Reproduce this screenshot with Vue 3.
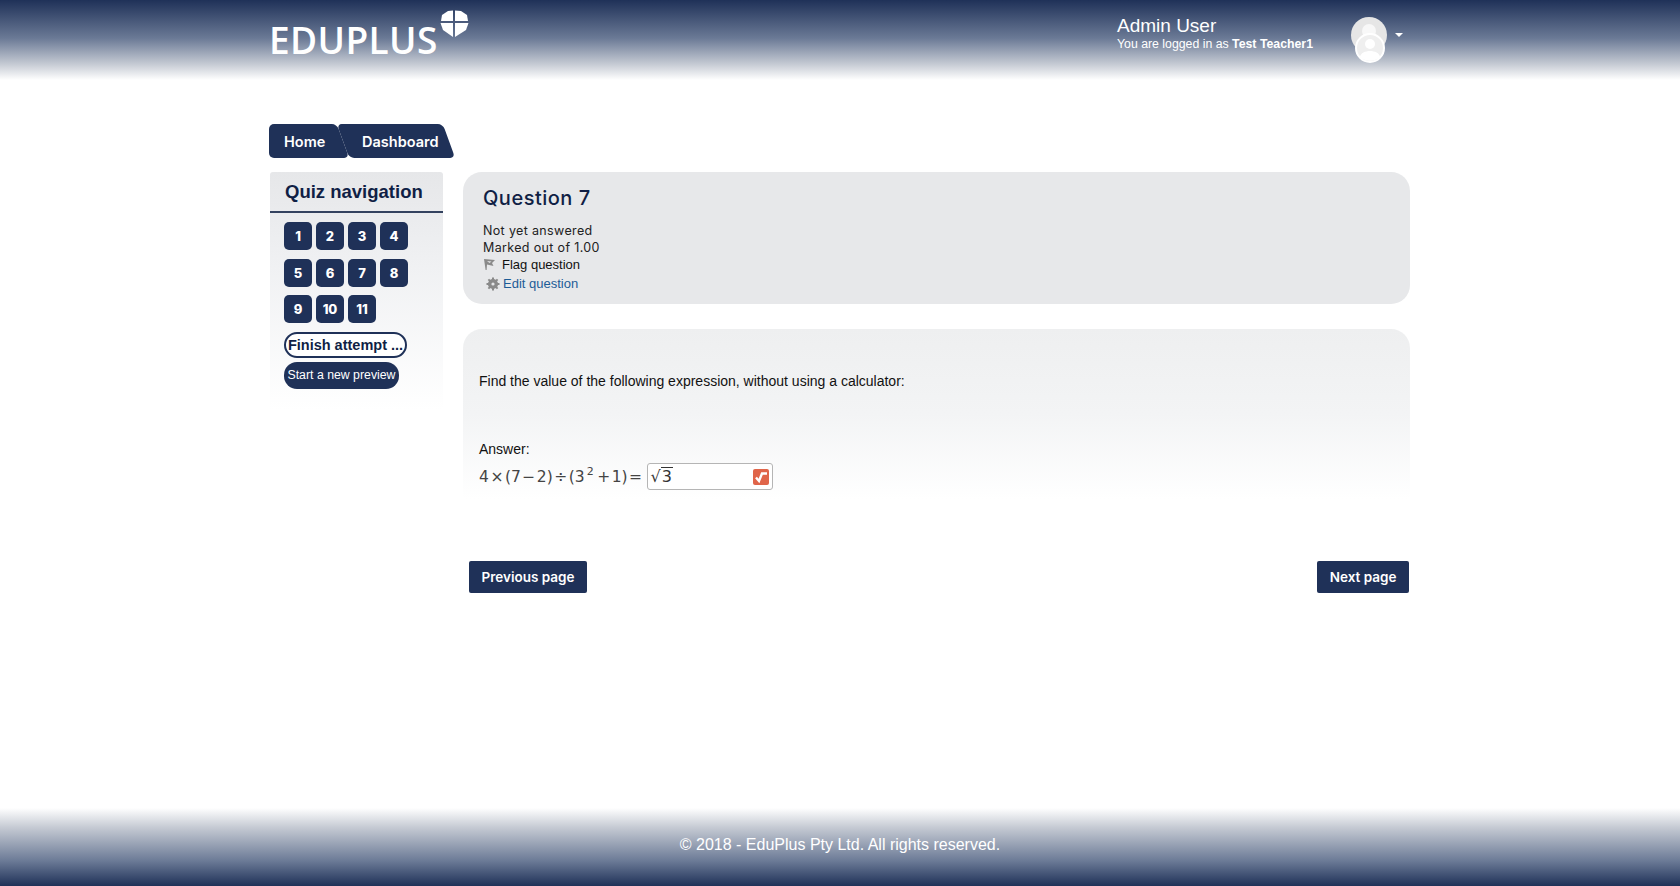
<script setup>
const pages = [1, 2, 3, 4, 5, 6, 7, 8, 9, 10, 11];
</script>

<template>
  <div class="page">
    <header class="top">
      <div class="top-inner">
        <div class="logo">
          <span class="logo-text">EDUPLUS</span>
          <svg class="logo-mark" width="29" height="28" viewBox="0 0 29 28">
            <path d="M8 1 L13 0.5 L13 11 L1 11 L2 5 Z" fill="#fff" />
            <path d="M15 0.5 L21 1 L27 5 L28 11 L15 11 Z" fill="#fff" />
            <path d="M0.5 13 L13 13 L13 27 L3 20 Z" fill="#fff" />
            <path d="M15 13 L28.5 13 L26 20 L15 27 Z" fill="#fff" />
          </svg>
        </div>
        <div class="user">
          <div class="user-text">
            <div class="user-name">Admin User</div>
            <div class="user-sub">You are logged in as <b>Test Teacher1</b></div>
          </div>
          <svg class="avatar" width="38" height="46" viewBox="0 0 38 46">
            <circle cx="18" cy="18" r="18" fill="#e6e6e6" />
            <circle cx="18" cy="14" r="7" fill="#f8f8f8" />
            <circle cx="19" cy="31" r="14" fill="#efefef" stroke="#fff" stroke-width="2" />
            <circle cx="19" cy="27" r="5" fill="#fff" />
            <path d="M9 40 C10 32 28 32 29 40 C24 45 14 45 9 40 Z" fill="#fff" />
          </svg>
          <span class="caret"></span>
        </div>
      </div>
    </header>

    <main class="content">
      <nav class="tabs">
        <a class="tab tab-home">Home</a>
        <a class="tab tab-dash">Dashboard</a>
      </nav>

      <div class="columns">
        <aside class="side">
          <h2 class="side-title">Quiz navigation</h2>
          <div class="side-body">
            <div class="grid">
              <span v-for="p in pages" :key="p" class="num">{{ p }}</span>
            </div>
            <a class="finish">Finish attempt ...</a>
            <a class="preview">Start a new preview</a>
          </div>
        </aside>

        <section class="main">
          <div class="info">
            <h3 class="q-title">Question 7</h3>
            <div class="meta">Not yet answered</div>
            <div class="meta">Marked out of 1.00</div>
            <div class="line flag">
              <svg width="13" height="13" viewBox="0 0 13 13">
                <path d="M1 1 L12 2 L9 5 L10.5 8 L4 6.5 L3.6 12 L2.6 12 Z" fill="#8a8a8a" />
                <path d="M4 3 L8.5 3.5 L6.5 5 Z" fill="#e4e5e7" />
              </svg>
              <span>Flag question</span>
            </div>
            <div class="line edit">
              <svg width="14" height="14" viewBox="0 0 14 14">
                <circle cx="7" cy="7" r="3.6" fill="none" stroke="#8a8a8a" stroke-width="3" />
                <path d="M7 0.5 V13.5 M0.5 7 H13.5 M2.4 2.4 L11.6 11.6 M11.6 2.4 L2.4 11.6" stroke="#8a8a8a" stroke-width="2" />
                <circle cx="7" cy="7" r="1.6" fill="#e4e5e7" />
              </svg>
              <a>Edit question</a>
            </div>
          </div>

          <div class="question">
            <p class="q-text">Find the value of the following expression, without using a calculator:</p>
            <div class="answer-label">Answer:</div>
            <div class="answer">
              <span class="expr">4<i>×</i>(7<i>−</i>2)<i>÷</i>(3<sup>2</sup><i>+</i>1)<i>=</i></span>
              <span class="input">
                <span class="root"><span class="root-sign">√</span><span class="root-val">3</span></span>
                <svg class="editor" width="16" height="16" viewBox="0 0 16 16">
                  <rect width="16" height="16" rx="2" fill="#e0654a" />
                  <path d="M3 8.5 L6 12 L9 4.5 H14" fill="none" stroke="#fff" stroke-width="2.4" />
                </svg>
              </span>
            </div>
          </div>

          <div class="pager">
            <a class="page-btn">Previous page</a>
            <a class="page-btn">Next page</a>
          </div>
        </section>
      </div>
    </main>

    <footer class="bottom">© 2018 - EduPlus Pty Ltd. All rights reserved.</footer>
  </div>
</template>

<style>
html, body {
  margin: 0;
  background: #fff;
}
</style>

<style scoped>
.page {
  display: flex;
  flex-direction: column;
  height: 886px;
  overflow: hidden;
  font-family: "Liberation Sans", Arial, sans-serif;
  color: #111;
}

.top {
  height: 80px;
  flex: none;
  background: linear-gradient(to bottom, #1f3158 0%, #6b7a96 48%, #c5cad3 80%, #fff 100%);
}
.top-inner {
  width: 1141px;
  margin-left: 269px;
  display: flex;
  justify-content: space-between;
}
.logo {
  display: flex;
  align-items: flex-start;
}
.logo-text {
  margin-top: 17px;
  font-family: "Open Sans", sans-serif;
  font-weight: 600;
  font-size: 37px;
  line-height: 45px;
  color: #fff;
  letter-spacing: 0.4px;
}
.logo-mark {
  margin-top: 10px;
  margin-left: 2px;
}
.user {
  display: flex;
  align-items: flex-start;
  margin-right: 7px;
}
.user-text {
  margin-top: 15px;
  width: 234px;
  color: #fff;
}
.user-name {
  font-size: 19px;
  line-height: 22px;
}
.user-sub {
  font-size: 12.3px;
  line-height: 14px;
}
.avatar {
  margin-top: 17px;
}
.caret {
  margin: 33px 0 0 6px;
  width: 0;
  height: 0;
  border-left: 4px solid transparent;
  border-right: 4px solid transparent;
  border-top: 4px solid #fff;
}

.content {
  flex: 1;
  width: 1141px;
  margin-left: 269px;
  padding-top: 44px;
}

.tabs {
  display: flex;
  height: 34px;
}
.tab {
  position: relative;
  z-index: 0;
  display: flex;
  align-items: center;
  height: 34px;
  box-sizing: border-box;
  font-family: "Inter", sans-serif;
  font-weight: 600;
  font-size: 14.5px;
  color: #fff;
}
.tab::before {
  content: "";
  position: absolute;
  z-index: -1;
  top: 0;
  bottom: 0;
  background: #1f3158;
  border-radius: 5px;
  transform: skewX(20deg);
}
.tab-home {
  width: 74px;
  padding-left: 15px;
}
.tab-home::before {
  left: 20px;
  right: 0;
}
.tab-home::after {
  content: "";
  position: absolute;
  z-index: -1;
  left: 0;
  top: 0;
  bottom: 0;
  width: 40px;
  background: #1f3158;
  border-radius: 5px 0 0 5px;
}
.tab-dash {
  width: 106px;
  margin-left: 0;
  padding-left: 19px;
}
.tab-dash::before {
  left: 0;
  right: 0;
}

.columns {
  display: flex;
  align-items: flex-start;
  gap: 20px;
  margin-top: 14px;
}

.side {
  width: 173px;
  margin-left: 1px;
  flex: none;
  box-sizing: border-box;
  height: 238px;
  background: linear-gradient(to bottom, #e6e7e9 0%, #f0f1f3 40%, #fff 100%);
  border-radius: 3px 3px 0 0;
}
.side-title {
  margin: 0;
  height: 41px;
  box-sizing: border-box;
  padding: 9px 15px 0;
  border-bottom: 2px solid #33425f;
  font-size: 18.5px;
  line-height: 22px;
  font-weight: 700;
  color: #101f45;
}
.side-body {
  padding: 9px 14px 0;
}
.grid {
  display: grid;
  grid-template-columns: repeat(4, 28px);
  column-gap: 4px;
  row-gap: 8.5px;
}
.num {
  width: 28px;
  height: 28px;
  display: flex;
  align-items: center;
  justify-content: center;
  background: #1f3158;
  border-radius: 5px;
  color: #fff;
  font-family: "Inter", sans-serif;
  font-weight: 800;
  font-size: 13px;
}
.finish {
  display: block;
  margin-top: 9px;
  width: 123px;
  height: 26px;
  box-sizing: border-box;
  border: 2px solid #1f3158;
  border-radius: 13px;
  background: #fff;
  color: #101f45;
  font-weight: 700;
  font-size: 14.5px;
  line-height: 22px;
  text-align: center;
  white-space: nowrap;
}
.preview {
  display: block;
  margin-top: 4px;
  width: 115px;
  height: 27px;
  border-radius: 13px;
  background: #1f3158;
  color: #fff;
  font-size: 12.3px;
  line-height: 26px;
  text-align: center;
  white-space: nowrap;
}

.main {
  flex: 1;
  min-width: 0;
}
.info {
  height: 132px;
  box-sizing: border-box;
  padding: 14px 20px 0;
  background: #e7e8ea;
  border-radius: 19px;
}
.q-title {
  margin: 0 0 11px;
  font-family: "Inter", sans-serif;
  font-weight: 500;
  font-size: 20px;
  line-height: 25px;
  letter-spacing: 0.5px;
  color: #101f45;
}
.meta {
  font-family: "Inter", sans-serif;
  font-size: 12.5px;
  line-height: 17px;
  letter-spacing: 0.35px;
  color: #222;
}
.line {
  display: flex;
  align-items: center;
  gap: 6px;
  font-size: 13px;
  height: 17px;
}
.edit {
  margin-top: 2px;
  margin-left: 3px;
  gap: 3px;
  color: #1d5c97;
}

.question {
  margin-top: 25px;
  height: 170px;
  box-sizing: border-box;
  padding: 44px 16px 0;
  background: linear-gradient(to bottom, #eeeff0 0%, #f3f4f5 50%, #fff 100%);
  border-radius: 19px 19px 0 0;
}
.q-text {
  margin: 0;
  font-size: 14px;
  line-height: 17px;
}
.answer-label {
  margin-top: 51px;
  font-size: 14px;
  line-height: 17px;
}
.answer {
  display: flex;
  align-items: center;
  margin-top: 5px;
}
.expr {
  font-family: "DejaVu Sans", sans-serif;
  font-size: 15.5px;
  color: #444;
  white-space: nowrap;
}
.expr i {
  font-style: normal;
  margin: 0 1.5px;
}
.expr sup {
  font-size: 11px;
  line-height: 0;
  margin: 0 2px;
}
.input {
  display: flex;
  align-items: center;
  justify-content: space-between;
  margin-left: 3px;
  width: 126px;
  height: 27px;
  box-sizing: border-box;
  padding: 0 3px 0 3px;
  background: #fff;
  border: 1px solid #b5b5b5;
  border-radius: 3px;
}
.root {
  display: flex;
  align-items: flex-end;
  font-family: "DejaVu Sans", sans-serif;
  font-size: 16px;
  line-height: 18px;
  color: #333;
}
.root-val {
  border-top: 1px solid #333;
  padding: 0 1px;
}

.pager {
  display: flex;
  justify-content: space-between;
  margin-top: 62px;
  padding: 0 1px 0 6px;
}
.page-btn {
  display: block;
  height: 32px;
  padding: 0 12.5px;
  background: #1f3158;
  border-radius: 2px;
  color: #fff;
  font-family: "Inter", sans-serif;
  font-weight: 600;
  font-size: 13.5px;
  line-height: 32px;
}

.bottom {
  flex: none;
  height: 78px;
  box-sizing: border-box;
  padding-top: 28px;
  background: linear-gradient(to bottom, #fff 0%, #c5cad3 25%, #6b7a96 68%, #1f3158 100%);
  color: #fff;
  font-size: 16px;
  line-height: 18px;
  text-align: center;
}
</style>
